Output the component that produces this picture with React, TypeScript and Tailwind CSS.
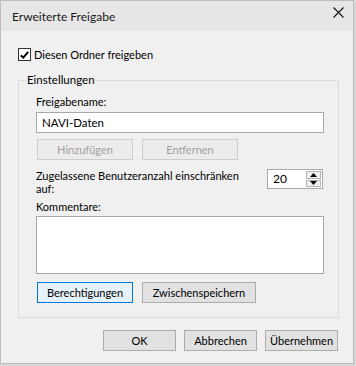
import type { ReactNode } from 'react';

const FONT = "font-['Lato','Liberation_Sans',sans-serif]";

function Button({ children, width, disabled, focused }: { children: ReactNode; width: string; disabled?: boolean; focused?: boolean }) {
  const look = disabled
    ? 'bg-[#ececec] border-[#cdcdcd] text-[#a0a0a0]'
    : focused
      ? 'bg-[#e5f1fb] border-[#0078d7] text-black'
      : 'bg-[#e1e1e1] border-[#adadad] text-black';
  return (
    <button
      type="button"
      disabled={disabled}
      className={`${width} h-[21px] border ${look} flex items-center justify-center text-[11px] leading-none`}
    >
      {children}
    </button>
  );
}

function Spinner({ value }: { value: string }) {
  return (
    <div className="w-[56px] h-[20px] border border-[#a9a9a9] bg-white flex">
      <div className="flex-1 pl-[5px] flex items-center leading-none text-[12px]">{value}</div>
      <div className="w-[17px] flex flex-col gap-px p-px">
        <div className="flex-1 bg-[#f0f0f0] border border-[#b4b4b4] flex items-center justify-center">
          <svg width="7" height="4" viewBox="0 0 7 4"><path d="M3.5 0 L7 4 L0 4 Z" fill="#000" /></svg>
        </div>
        <div className="flex-1 bg-[#f0f0f0] border border-[#b4b4b4] flex items-center justify-center">
          <svg width="7" height="4" viewBox="0 0 7 4"><path d="M0 0 L7 0 L3.5 4 Z" fill="#000" /></svg>
        </div>
      </div>
    </div>
  );
}

export default function App() {
  return (
    <div className={`w-[356px] h-[366px] bg-[#d6d6d6] ${FONT} text-[11px] text-black`}>
      <div className="w-[354px] h-[364px] bg-[#f0f0f0] border border-[#bdbdbd] flex flex-col">
        {/* title bar */}
        <div className="h-[30px] bg-[#e6e6e6] flex items-start shrink-0">
          <span className="ml-[11px] mt-[8px] text-[12px] leading-[16px] text-[#1a1a1a]">Erweiterte Freigabe</span>
          <svg className="ml-auto mr-[9px] mt-[6px]" width="11" height="11" viewBox="0 0 11 11">
            <path d="M0.5 0.5 L10.5 10.5 M10.5 0.5 L0.5 10.5" stroke="#111" strokeWidth="1.1" />
          </svg>
        </div>

        {/* share checkbox */}
        <div className="mt-[17px] ml-[17px] h-[13px] flex items-center gap-[3px]">
          <div className="w-[13px] h-[13px] border border-[#333] bg-white flex items-center justify-center">
            <svg width="9" height="8" viewBox="0 0 9 8">
              <path d="M0.8 4.2 L3.3 6.6 L8.2 0.8" stroke="#000" strokeWidth="1.9" fill="none" />
            </svg>
          </div>
          <span className="leading-[16px]">Diesen Ordner freigeben</span>
        </div>

        {/* settings group */}
        <fieldset className="mt-[11px] ml-[17px] w-[321px] border border-[#dcdcdc] pl-[17px] pr-[14px] pb-[14px] flex flex-col">
          <legend className="-ml-[10px] px-[1px] leading-[16px] text-[11.5px]">Einstellungen</legend>

          <div className="mt-[6px] leading-[16px]">Freigabename:</div>
          <input
            readOnly
            value="NAVI-Daten"
            className={`mt-[2px] w-[288px] h-[21px] border border-[#a9a9a9] bg-white pl-[5px] text-[11.5px] outline-none ${FONT}`}
          />

          <div className="mt-[6px] ml-[1px] flex gap-[9px]">
            <Button width="w-[96px]" disabled>Hinzufügen</Button>
            <Button width="w-[96px]" disabled>Entfernen</Button>
          </div>

          <div className="mt-[9px] flex justify-between items-start">
            <div className="leading-[13px]">
              Zugelassene Benutzeranzahl einschränken
              <br />
              auf:
            </div>
            <div className="mr-px">
              <Spinner value="20" />
            </div>
          </div>

          <div className="mt-[4px] leading-[16px]">Kommentare:</div>
          <div className="mt-[1px] w-[288px] h-[58px] border border-[#a9a9a9] bg-white" />

          <div className="mt-[8px] ml-[1px] flex gap-[9px]">
            <Button width="w-[96px]" focused>Berechtigungen</Button>
            <Button width="w-[114px]">Zwischenspeichern</Button>
          </div>
        </fieldset>

        {/* dialog buttons */}
        <div className="mt-[12px] pr-[15px] flex justify-end gap-[8px]">
          <Button width="w-[73px]">OK</Button>
          <Button width="w-[73px]">Abbrechen</Button>
          <Button width="w-[73px]">Übernehmen</Button>
        </div>
      </div>
    </div>
  );
}
